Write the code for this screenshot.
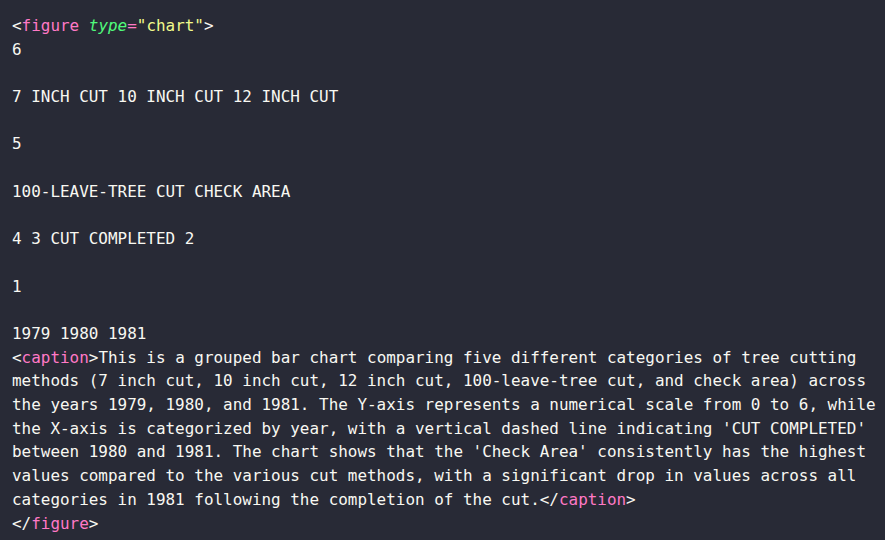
export default function App() {
  const plain = [
    "6",
    "",
    "7 INCH CUT 10 INCH CUT 12 INCH CUT",
    "",
    "5",
    "",
    "100-LEAVE-TREE CUT CHECK AREA",
    "",
    "4 3 CUT COMPLETED 2",
    "",
    "1",
    "",
    "1979 1980 1981",
  ];
  const cap = [
    "methods (7 inch cut, 10 inch cut, 12 inch cut, 100-leave-tree cut, and check area) across",
    "the years 1979, 1980, and 1981. The Y-axis represents a numerical scale from 0 to 6, while",
    "the X-axis is categorized by year, with a vertical dashed line indicating 'CUT COMPLETED'",
    "between 1980 and 1981. The chart shows that the 'Check Area' consistently has the highest",
    "values compared to the various cut methods, with a significant drop in values across all",
  ];
  return (
    <div className="w-[885px] h-[540px] overflow-hidden bg-[#282a36] text-[#f8f8f2] font-['DejaVu_Sans_Mono',monospace] text-[15.95px] leading-[23.7px] pt-[14px] pl-[12px]">
      <div className="whitespace-pre">
        &lt;<span className="text-[#ff79c6]">figure</span> <span className="text-[#50fa7b] italic">type</span>
        <span className="text-[#ff79c6]">=</span>
        <span className="text-[#f1fa8c]">"chart"</span>&gt;
      </div>
      {plain.map((l, i) => (
        <div key={i} className="whitespace-pre h-[23.7px]">{l}</div>
      ))}
      <div className="whitespace-pre">
        &lt;<span className="text-[#ff79c6]">caption</span>&gt;This is a grouped bar chart comparing five different categories of tree cutting
      </div>
      {cap.map((l, i) => (
        <div key={i} className="whitespace-pre">{l}</div>
      ))}
      <div className="whitespace-pre">
        categories in 1981 following the completion of the cut.&lt;/<span className="text-[#ff79c6]">caption</span>&gt;
      </div>
      <div className="whitespace-pre">
        &lt;/<span className="text-[#ff79c6]">figure</span>&gt;
      </div>
    </div>
  );
}
